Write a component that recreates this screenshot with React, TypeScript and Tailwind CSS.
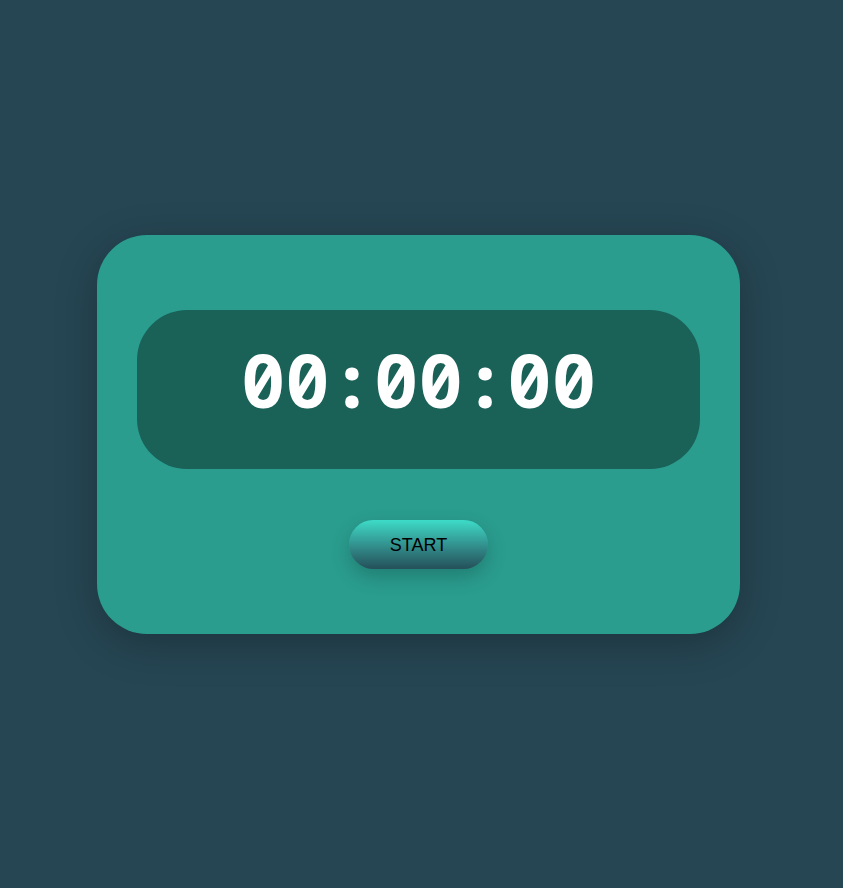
import React from "react";

const App = () => {
  return (
    <div className="min-h-screen w-full bg-[#264653] flex justify-center pt-[235px] pr-[6px]">
      <div className="w-[643px] h-[399px] rounded-[50px] bg-[#2a9d8f] px-10 pt-[75px] flex flex-col items-center shadow-[0_10px_40px_rgba(0,0,0,0.25)]">
        <div className="w-full h-[159px] rounded-[50px] bg-[#1a6157] flex items-center justify-center pb-[20px]">
          <span className="text-white font-bold text-[74px] leading-none font-['Noto_Sans_Mono',monospace]">
            00:00:00
          </span>
        </div>
        <button className="mt-[51px] w-[139px] h-[49px] rounded-full bg-gradient-to-b from-[#3ddcc8] to-[#24505a] text-black text-lg font-['Liberation_Sans',Arial,sans-serif] shadow-[0_8px_20px_rgba(0,0,0,0.2)]">
          START
        </button>
      </div>
    </div>
  );
};

export default App;
